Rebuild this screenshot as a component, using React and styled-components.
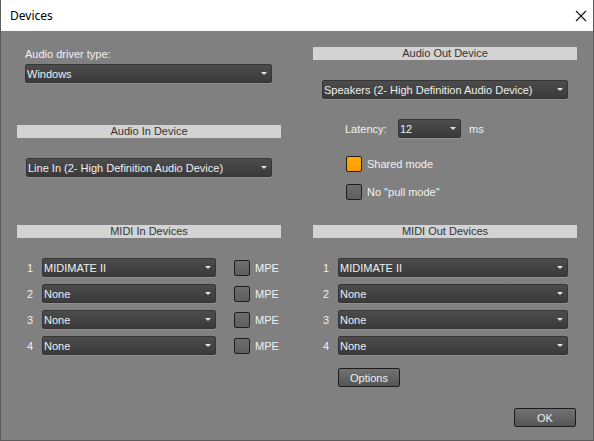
import React from 'react';
import styled, { createGlobalStyle } from 'styled-components';

const midiIn = ['MIDIMATE II', 'None', 'None', 'None'];
const midiOut = ['MIDIMATE II', 'None', 'None', 'None'];

function Combo({ value, $width, $indent, $top }) {
    return (
        <ComboBox $width={$width} $indent={$indent} $top={$top}>
            <ComboText>{value}</ComboText>
            <Arrow />
        </ComboBox>
    );
}

function App() {
    return (
        <>
            <GlobalStyle />
            <Window>
                <TitleBar>
                    <Title>Devices</Title>
                    <CloseBtn>
                        <svg width="12" height="12" viewBox="0 0 12 12">
                            <path d="M1 1 L11 11 M11 1 L1 11" stroke="#111" strokeWidth="1.1" fill="none" />
                        </svg>
                    </CloseBtn>
                </TitleBar>

                <Body>
                    <Columns>
                        {/* top left */}
                        <TopBlock>
                            <FieldLabel>Audio driver type:</FieldLabel>
                            <Combo value="Windows" $width={247} $indent={8} />
                            <SectionHeader $top={42}>Audio In Device</SectionHeader>
                            <Combo value="Line In (2- High Definition Audio Device)" $width={246} $indent={9} $top={20} />
                        </TopBlock>

                        {/* top right */}
                        <TopBlock>
                            <SectionHeader>Audio Out Device</SectionHeader>
                            <Combo value="Speakers (2- High Definition Audio Device)" $width={246} $indent={9} $top={20} />
                            <LatencyRow>
                                <InlineLabel $width={53}>Latency:</InlineLabel>
                                <Combo value="12" $width={63} />
                                <InlineLabel $gap={8}>ms</InlineLabel>
                            </LatencyRow>
                            <CheckRow $top={18}>
                                <CheckBox $checked />
                                <InlineLabel $gap={5}>Shared mode</InlineLabel>
                            </CheckRow>
                            <CheckRow $top={12}>
                                <CheckBox />
                                <InlineLabel $gap={5}>No "pull mode"</InlineLabel>
                            </CheckRow>
                        </TopBlock>

                        {/* midi in */}
                        <div>
                            <SectionHeader>MIDI In Devices</SectionHeader>
                            <RowList>
                                {midiIn.map((name, i) => (
                                    <MidiRow key={i}>
                                        <Num>{i + 1}</Num>
                                        <Combo value={name} $width={174} />
                                        <MpeBox />
                                        <InlineLabel $gap={5}>MPE</InlineLabel>
                                    </MidiRow>
                                ))}
                            </RowList>
                        </div>

                        {/* midi out */}
                        <div>
                            <SectionHeader>MIDI Out Devices</SectionHeader>
                            <RowList>
                                {midiOut.map((name, i) => (
                                    <MidiRow key={i}>
                                        <Num>{i + 1}</Num>
                                        <Combo value={name} $width={230} />
                                    </MidiRow>
                                ))}
                            </RowList>
                            <DarkButton $indent={25} $top={13}>Options</DarkButton>
                        </div>
                    </Columns>

                    <Footer>
                        <DarkButton>OK</DarkButton>
                    </Footer>
                </Body>
            </Window>
        </>
    );
}

const GlobalStyle = createGlobalStyle`
    html, body {
        margin: 0;
        padding: 0;
        background: #808080;
    }
    * { box-sizing: border-box; }
`;

const Window = styled.div`
    width: 594px;
    height: 441px;
    border: 1px solid #5c5c5c;
    border-top: none;
    background: #808080;
    display: flex;
    flex-direction: column;
    font-family: 'Liberation Sans', Arial, sans-serif;
    font-size: 11px;
`;

const TitleBar = styled.div`
    height: 31px;
    background: #ffffff;
    display: flex;
    align-items: center;
    justify-content: space-between;
    padding-left: 9px;
`;

const Title = styled.span`
    font-family: 'Noto Sans', 'Open Sans', sans-serif;
    font-size: 12px;
    color: #000;
    margin-top: -1px;
`;

const CloseBtn = styled.div`
    width: 46px;
    height: 31px;
    display: flex;
    align-items: center;
    justify-content: center;
    margin-right: -1px;
    padding-left: 20px;
`;

const Body = styled.div`
    flex: 1;
    padding: 16px 16px 0 16px;
    display: flex;
    flex-direction: column;
`;

const Columns = styled.div`
    display: grid;
    grid-template-columns: 264px 264px;
    grid-template-rows: 178px auto;
    column-gap: 32px;
`;

const TopBlock = styled.div`
    display: flex;
    flex-direction: column;
`;

const FieldLabel = styled.div`
    margin-left: 8px;
    height: 17px;
    line-height: 14px;
    color: #f2f2f2;
`;

const SectionHeader = styled.div`
    height: 13px;
    line-height: 13px;
    margin-top: ${p => p.$top || 0}px;
    background: #d3d3d3;
    color: #333333;
    text-align: center;
`;

const ComboBox = styled.div`
    position: relative;
    width: ${p => p.$width}px;
    height: 19px;
    margin-left: ${p => p.$indent || 0}px;
    margin-top: ${p => p.$top || 0}px;
    flex-shrink: 0;
    border: 1px solid #353535;
    border-radius: 2px;
    background: linear-gradient(to bottom, #4c4c4c, #3a3a3a);
    box-shadow: 0 1px 0 rgba(255, 255, 255, 0.12);
    display: flex;
    align-items: center;
    padding-left: 1px;
`;

const ComboText = styled.span`
    color: #f0f0f0;
    white-space: nowrap;
`;

const Arrow = styled.span`
    position: absolute;
    right: 4px;
    top: 7px;
    width: 0;
    height: 0;
    border-left: 3px solid transparent;
    border-right: 3px solid transparent;
    border-top: 3px solid #e8e8e8;
`;

const LatencyRow = styled.div`
    display: flex;
    align-items: center;
    margin-top: 20px;
    padding-left: 32px;
    height: 19px;
`;

const InlineLabel = styled.span`
    color: #f2f2f2;
    margin-left: ${p => p.$gap || 0}px;
    width: ${p => (p.$width ? `${p.$width}px` : 'auto')};
    white-space: nowrap;
`;

const CheckRow = styled.div`
    display: flex;
    align-items: center;
    margin-top: ${p => p.$top}px;
    padding-left: 33px;
    height: 16px;
`;

const CheckBox = styled.span`
    width: 16px;
    height: 16px;
    flex-shrink: 0;
    border: 1px solid #1e1e1e;
    border-radius: 2px;
    background: ${p =>
        p.$checked
            ? 'linear-gradient(to bottom, #ffab00, #ff9c00)'
            : 'linear-gradient(to bottom, #6e6e6e, #5e5e5e)'};
`;

const MpeBox = styled(CheckBox)`
    margin-left: 18px;
`;

const RowList = styled.div`
    display: flex;
    flex-direction: column;
    gap: 7px;
    margin-top: 20px;
`;

const MidiRow = styled.div`
    display: flex;
    align-items: center;
    height: 19px;
`;

const Num = styled.span`
    width: 25px;
    padding-left: 10px;
    color: #eeeeee;
`;

const DarkButton = styled.div`
    width: 62px;
    height: 19px;
    margin-left: ${p => p.$indent || 0}px;
    margin-top: ${p => p.$top || 0}px;
    border: 1px solid #1c1c1c;
    border-radius: 2px;
    background: linear-gradient(to bottom, #727272, #555555);
    color: #f0f0f0;
    display: flex;
    align-items: center;
    justify-content: center;
`;

const Footer = styled.div`
    display: flex;
    justify-content: flex-end;
    margin-top: 21px;
    padding-right: 1px;
`;

export default App;
